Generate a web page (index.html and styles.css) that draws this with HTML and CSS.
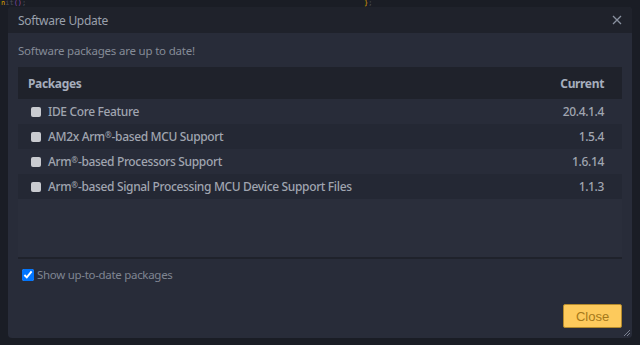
FILE: index.html
```html
<html>
<head>
  <meta charset="UTF-8">
  <title>Software Update</title>
  <link rel="stylesheet" href="styles.css">
</head>
<body>
<div class="editor">
  <span class="code-left"><span class="c-fn">n</span><span class="c-dim">it</span><span class="c-paren">()</span><span class="c-dim">;</span></span>
  <span class="code-right"><span class="c-fn">}</span><span class="c-dim">;</span></span>
</div>
<div class="dialog">
  <div class="dialog-header">
    <span class="dialog-title">Software Update</span>
    <span class="dialog-close">
      <svg width="10" height="10" viewBox="0 0 10 10"><path d="M1 1L9 9M9 1L1 9" stroke="#8a91a0" stroke-width="1.3"/></svg>
    </span>
  </div>
  <div class="dialog-body">
    <p class="status">Software packages are up to date!</p>
    <div class="table-box">
      <table class="pkg-table">
        <thead>
          <tr><th class="col-name">Packages</th><th class="col-ver">Current</th></tr>
        </thead>
        <tbody>
          <tr><td class="col-name"><span class="box"></span>IDE Core Feature</td><td class="col-ver">20.4.1.4</td></tr>
          <tr class="alt"><td class="col-name"><span class="box"></span>AM2x Arm<span class="reg">®</span>-based MCU Support</td><td class="col-ver">1.5.4</td></tr>
          <tr><td class="col-name"><span class="box"></span>Arm<span class="reg">®</span>-based Processors Support</td><td class="col-ver">1.6.14</td></tr>
          <tr class="alt"><td class="col-name"><span class="box"></span>Arm<span class="reg">®</span>-based Signal Processing MCU Device Support Files</td><td class="col-ver">1.1.3</td></tr>
        </tbody>
      </table>
    </div>
    <label class="show-row"><input type="checkbox" checked>Show up-to-date packages</label>
    <div class="footer">
      <button class="btn-close">Close</button>
    </div>
  </div>
  <svg class="grip" width="8" height="8" viewBox="0 0 8 8"><path d="M7 1L1 7M7 4L4 7" stroke="#7a8090" stroke-width="1"/></svg>
</div>
</body>
</html>
```
FILE: styles.css
```css
body {
  margin: 0;
  width: 640px;
  height: 345px;
  background-color: #1a1d25;
  font-family: "Noto Sans", "Open Sans", sans-serif;
  overflow: hidden;
}

.editor {
  height: 7px;
  position: relative;
  font-family: "DejaVu Sans Mono", monospace;
  font-size: 7px;
  line-height: 7px;
}

.code-left {
  position: absolute;
  left: 1px;
  top: 0;
}

.code-right {
  position: absolute;
  left: 364px;
  top: 0;
}

.c-fn { color: #d7a200; }
.c-dim { color: #4a4f5c; }
.c-paren { color: #8a4aa8; }

.dialog {
  position: relative;
  margin: 0 8px;
  height: 331px;
  background-color: #282c39;
  border-radius: 4px;
  display: flex;
  flex-direction: column;
  overflow: hidden;
}

.dialog-header {
  height: 26px;
  background-color: #1f222b;
  display: flex;
  align-items: center;
  justify-content: space-between;
  padding: 0 10px 0 10px;
}

.dialog-title {
  color: #9aa0ab;
  font-size: 12px;
  letter-spacing: -0.3px;
}

.dialog-close {
  display: flex;
}

.dialog-body {
  flex: 1;
  display: flex;
  flex-direction: column;
  padding: 0 10px;
}

.status {
  margin: 10px 0 0 0;
  color: #858b97;
  font-size: 11.5px;
  letter-spacing: -0.2px;
  line-height: 16px;
}

.table-box {
  margin-top: 8px;
  height: 190px;
  background-color: #2a2e3b;
  border-bottom: 2px solid #1f222b;
}

.pkg-table {
  width: 100%;
  border-collapse: collapse;
  font-size: 12px;
  letter-spacing: -0.35px;
}

.pkg-table th {
  height: 32px;
  background-color: #1f222b;
  color: #a6aebd;
  font-weight: bold;
  text-align: left;
}

.pkg-table td {
  height: 25px;
  color: #a0a5b0;
  background-color: #282c39;
  font-weight: 500;
}

.pkg-table tr.alt td {
  background-color: #242834;
}

.reg {
  font-size: 8px;
  vertical-align: 3px;
  letter-spacing: 0;
}

.col-name {
  padding-left: 10px;
}

.pkg-table .col-ver {
  text-align: right;
  padding-right: 18px;
}

.box {
  display: inline-block;
  width: 10px;
  height: 10px;
  background-color: #c9cbd0;
  border-radius: 2px;
  margin: 0 7px 0 3px;
  vertical-align: -1px;
}

.show-row {
  margin-top: 8px;
  display: flex;
  align-items: center;
  color: #7f8592;
  font-size: 11.5px;
  letter-spacing: -0.3px;
}

.show-row input {
  margin: 0 3px 0 4px;
  width: 12px;
  height: 12px;
}

.footer {
  flex: 1;
  display: flex;
  justify-content: flex-end;
  align-items: flex-end;
  padding-bottom: 10px;
}

.btn-close {
  width: 59px;
  height: 24px;
  background-color: #fdca5c;
  border: 1px solid #b48a2c;
  border-radius: 2px;
  color: #a5791a;
  font-family: "Liberation Sans", Arial, sans-serif;
  font-size: 13px;
}

.grip {
  position: absolute;
  right: 1px;
  bottom: 1px;
}
```
